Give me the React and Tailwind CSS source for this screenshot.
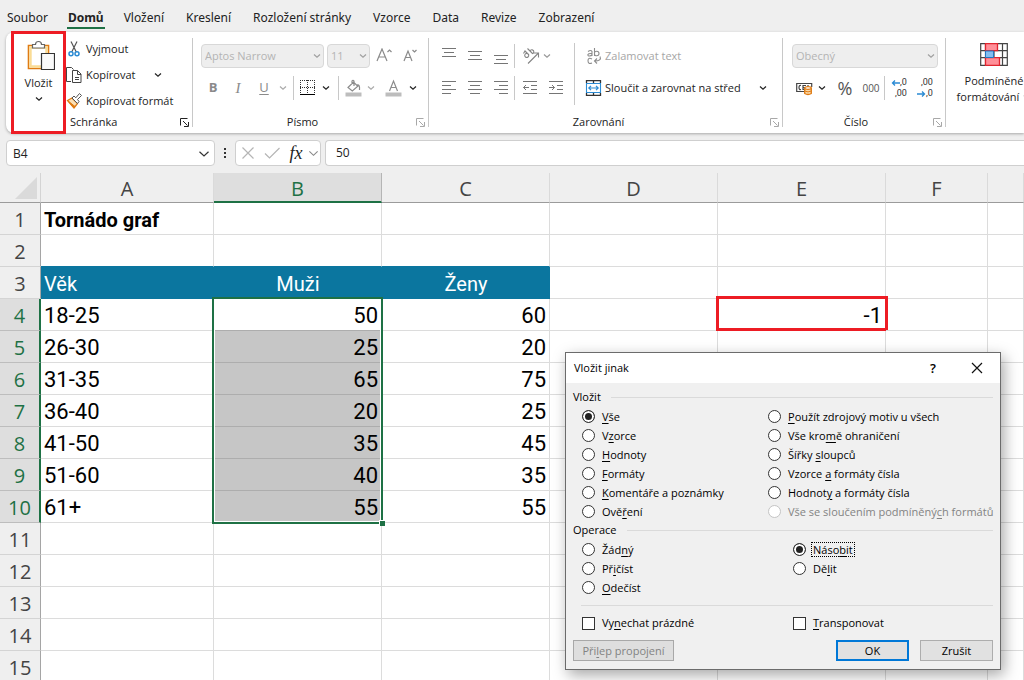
import React from "react";

const uiFont = "font-['Open_Sans','Noto_Sans',sans-serif]";

function Chevron({ className = "text-[#222]", size = 8 }) {
  return (
    <svg width={size} height={size} viewBox="0 0 8 8" className={className} fill="none" stroke="currentColor" strokeWidth={size > 8 ? 0.8 : 1.2} aria-hidden="true">
      <path d="M1 2.500 4 5.300 7 2.500" />
    </svg>
  );
}

function Launcher({ label, className = "text-[#222]" }) {
  return (
    <button aria-label={label} className={"absolute right-[3px] bottom-1.5 " + className}>
      <svg width="9" height="9" viewBox="0 0 9 9" fill="none" stroke="currentColor" aria-hidden="true">
        <path d="M.5 7.500v-7h7M3 3l4.500 4.500M8.500 4v4.500h-4.500" />
      </svg>
    </button>
  );
}

function Group({ label, launcher, launcherTone, labelClass = "text-center", className, children }) {
  return (
    <>
      <section aria-label={label} className={"relative flex shrink-0 flex-col " + className}>
        <div className="flex-1">{children}</div>
        <div className={"mb-[3px] h-4 text-[11px] leading-4 " + labelClass}>{label}</div>
        {launcher && <Launcher label={launcher} className={launcherTone} />}
      </section>
      <div className="my-1.5 w-px shrink-0 bg-[#c8c8c8]" />
    </>
  );
}

function IconButton({ label, className = "w-[26px]", children }) {
  return (
    <button aria-label={label} className={"flex h-6 shrink-0 items-center justify-center " + className}>
      {children}
    </button>
  );
}

function Divider() {
  return <div className="h-6 w-px shrink-0 bg-[#c8c8c8]" />;
}

function RibbonSelect({ label, value, className }) {
  return (
    <div className={"relative shrink-0 " + className}>
      <select aria-label={label} disabled className="block h-6 w-full appearance-none rounded-[4px] border border-[#d8d8d8] bg-[#eeeeee] pl-[3px] text-[11px] text-[#b4b4b4]">
        <option>{value}</option>
      </select>
      <Chevron className="pointer-events-none absolute top-2 right-[3px] text-[#a0a0a0]" />
    </div>
  );
}

function Lines({ d }) {
  return (
    <svg width="16" height="16" viewBox="0 0 16 16" fill="none" stroke="#757575" aria-hidden="true">
      <path d={d} />
    </svg>
  );
}

function ClipboardGroup() {
  return (
    <Group label="Schránka" labelClass="pl-16" launcher="Možnosti schránky" className="w-[186px]">
      <div className="flex">
        <button className="relative flex h-20 w-[60px] flex-col items-center pt-2 pl-[9px] text-[11px]">
          <svg width="28" height="32" viewBox="0 0 28 32" fill="none" aria-hidden="true">
            <path d="M1.500 5.500h20v23h-20z" fill="#fff" stroke="#df7b13" strokeWidth="1.600" />
            <path d="M3.500 7.500h16v19h-16z" stroke="#fadc95" strokeWidth="2.400" />
            <path d="M5.500 8V4.500h3C8.500 2.500 9.800 1.500 11.500 1.500s3 1 3 3h3V8z" fill="#fff" stroke="#666" strokeWidth="1.200" />
            <path d="M14.500 13.500h13v16h-13z" fill="#fafafa" stroke="#333" strokeWidth="1.200" />
          </svg>
          <span className="mt-[3px] pr-1 leading-4">Vložit</span>
          <Chevron className="mt-1 mr-1 text-[#222]" />
          <span aria-hidden="true" className="absolute -top-px left-[5px] h-[103px] w-[55px] border-[3px] border-[#ed1c24]" />
        </button>
        <div className="flex flex-col items-start pt-1 text-[11px]">
          <button className="flex h-[26px] items-center gap-1">
            <svg width="16" height="18" viewBox="0 0 16 18" fill="none" aria-hidden="true">
              <path d="M5 1.500 10.300 12M11 1.500 5.700 12" stroke="#555" strokeWidth="1.200" />
              <circle cx="5" cy="13.800" r="2" stroke="#2b8bd4" strokeWidth="1.500" />
              <circle cx="11" cy="13.800" r="2" stroke="#2b8bd4" strokeWidth="1.500" />
            </svg>
            Vyjmout
          </button>
          <button className="flex h-[26px] items-center gap-1">
            <svg width="16" height="18" viewBox="0 0 16 18" fill="none" stroke="#444" aria-hidden="true">
              <path d="M5 15.500H.5v-14h5l2 2" />
              <path d="M6.500 4.500h5l3.500 3.500v8.500H6.500z" fill="#fff" />
              <path d="M11.500 4.500v4h3.500M9 11.500h4M9 13.500h4" />
            </svg>
            Kopírovat
            <Chevron className="ml-3.5 text-[#222]" />
          </button>
          <button className="flex h-[26px] items-center gap-1">
            <svg width="16" height="18" viewBox="0 0 16 18" fill="none" aria-hidden="true">
              <path d="M1.500 8.500 6 6l5.500 5.500L8 16z" fill="#fbe0b5" stroke="#df7b13" strokeWidth="1.300" />
              <path d="M2 9l7 5.500L8 16z" fill="#df7b13" stroke="#df7b13" />
              <path d="M6 6l2-2 1.800 1.800L13.500 1.500 15.500 3.500 11.500 7.500 13 9.500 11.500 11.500z" fill="#fff" stroke="#555" />
            </svg>
            Kopírovat formát
          </button>
        </div>
      </div>
    </Group>
  );
}

function FontGroup() {
  return (
    <Group label="Písmo" launcher="Nastavení písma" launcherTone="text-[#a8a8a8]" labelClass="text-center pr-4" className="w-[235px]">
      <div className="flex flex-col gap-2 pt-3 pl-2 text-[#8a8a8a]">
        <div className="flex items-center">
          <RibbonSelect label="Písmo" value="Aptos Narrow" className="mr-[3px] w-[123px]" />
          <RibbonSelect label="Velikost písma" value="11" className="w-[43px]" />
          <IconButton label="Zvětšit písmo" className="w-7">
            <svg width="16" height="16" viewBox="0 0 16 16" fill="none" stroke="currentColor" strokeWidth="1.200" aria-hidden="true">
              <path d="M1 13 6 1l5 12M2.800 9h6.400M11.500 4 13.500 2l2 2" />
            </svg>
          </IconButton>
          <IconButton label="Zmenšit písmo" className="w-6">
            <svg width="16" height="16" viewBox="0 0 16 16" fill="none" stroke="currentColor" strokeWidth="1.200" aria-hidden="true">
              <path d="M2 13 6 3l4 10M3.500 9.500h5M10.500 2l2 2 2-2" />
            </svg>
          </IconButton>
        </div>
        <div className="flex items-center">
          <IconButton label="Tučné" className="w-6"><b className="text-[13px]">B</b></IconButton>
          <IconButton label="Kurzíva"><i className="font-['Liberation_Serif',serif] text-[15px]">I</i></IconButton>
          <IconButton label="Podtržené"><span className="text-[13px] underline underline-offset-2">U</span></IconButton>
          <IconButton label="Styly podtržení" className="mr-1 w-3"><Chevron className="text-[#aaa]" /></IconButton>
          <Divider />
          <IconButton label="Ohraničení" className="ml-1 w-5">
            <svg width="16" height="16" viewBox="0 0 16 16" fill="none" stroke="#333" shapeRendering="crispEdges" aria-hidden="true">
              <path d="M0 .5h15M0 7.500h15M.5 0v14M7.500 0v14M14.500 0v14" strokeDasharray="1 1" />
              <path d="M0 14.500h15" stroke="#000" />
            </svg>
          </IconButton>
          <IconButton label="Styly ohraničení" className="mr-1 w-4"><Chevron /></IconButton>
          <Divider />
          <IconButton label="Barva výplně" className="ml-0.5 w-6">
            <svg width="17" height="18" viewBox="0 0 17 18" fill="none" stroke="#8c8c8c" strokeWidth="1.200" aria-hidden="true">
              <path d="M3 8.500 8.500 3l4.300 4.300-5.500 4.700zM7 5V2q1-1.500 2 0v5M12 6q3-1 2.500 5" />
              <path d="M.5 15.500h16" stroke="#bdbdbd" strokeWidth="4" />
            </svg>
          </IconButton>
          <IconButton label="Další barvy výplně" className="w-3"><Chevron className="text-[#aaa]" /></IconButton>
          <IconButton label="Barva písma" className="ml-0.5 w-7">
            <svg width="17" height="18" viewBox="0 0 17 18" fill="none" stroke="#8c8c8c" strokeWidth="1.200" aria-hidden="true">
              <path d="M4.500 12 8.500 2l4 10M6 8.500h5" />
              <path d="M.5 15.500h16" stroke="#bdbdbd" strokeWidth="4" />
            </svg>
          </IconButton>
          <IconButton label="Další barvy písma" className="w-3"><Chevron /></IconButton>
        </div>
      </div>
    </Group>
  );
}

function AlignmentGroup() {
  return (
    <Group label="Zarovnání" launcher="Nastavení zarovnání" launcherTone="text-[#a8a8a8]" labelClass="text-center pr-3.5" className="w-[353px]">
      <div className="flex pt-3 pl-[7px]">
        <div className="flex flex-col gap-2">
          <div className="flex">
            <IconButton label="Zarovnat nahoru"><Lines d="M1 .5h14M3 4.500h10M1 8.500h14" /></IconButton>
            <IconButton label="Zarovnat na střed výšky"><Lines d="M1 3.500h14M3 7.500h10M1 11.500h14" /></IconButton>
            <IconButton label="Zarovnat dolů"><Lines d="M1 7.500h14M3 11.500h10M1 15.500h14" /></IconButton>
            <Divider />
            <IconButton label="Orientace" className="ml-1.5 w-5">
              <svg width="18" height="18" viewBox="0 0 18 18" fill="none" stroke="#858585" strokeWidth="1.100" aria-hidden="true">
                <path d="M6 16.500 16 6.500M12 6h4.500v4.500" />
                <path d="M1.500 6.500l1.500-2.500 4 4M6.500 7.500a2 2 0 1 0-3 2.500 2 2 0 0 0 3-2.500M5.500 1.500l5 5M8 4a2 2 0 1 1 2 2.800" />
              </svg>
            </IconButton>
            <IconButton label="Další orientace" className="w-3"><Chevron className="text-[#999]" /></IconButton>
          </div>
          <div className="flex">
            <IconButton label="Zarovnat vlevo"><Lines d="M1 1.500h14M1 5.500h9M1 9.500h14M1 13.500h9" /></IconButton>
            <IconButton label="Zarovnat na střed"><Lines d="M1 1.500h14M3 5.500h10M1 9.500h14M3 13.500h10" /></IconButton>
            <IconButton label="Zarovnat vpravo"><Lines d="M1 1.500h14M6 5.500h9M1 9.500h14M6 13.500h9" /></IconButton>
            <Divider />
            <IconButton label="Zmenšit odsazení" className="ml-0.5 w-[26px]"><Lines d="M1 1.500h14M9 5.500h6M9 9.500h6M1 13.500h14M7 7.500H1.500M4 5 1.500 7.500 4 10" /></IconButton>
            <IconButton label="Zvětšit odsazení"><Lines d="M1 1.500h14M9 5.500h6M9 9.500h6M1 13.500h14M1 7.500h5.500M4 5 6.500 7.500 4 10" /></IconButton>
          </div>
        </div>
        <div className="-mt-px mr-2.5 ml-[5px] h-[62px] w-px bg-[#c8c8c8]" />
        <div className="flex flex-1 flex-col gap-2 pr-[15px] text-[11px]">
          <button className="flex h-6 items-center gap-[3px] text-[#a6a6a6]">
            <svg width="17" height="18" viewBox="0 0 17 18" fill="none" stroke="#8c8c8c" strokeWidth="1.100" aria-hidden="true">
              <path d="M3 4.500q3-2 4 0v4.500M7 6.500c-5-.5-5 2.500-2.500 2.500Q6.500 9 7 7.500M9.500 1v8M9.500 6c0-2.500 4.500-2.500 4.500.500s-4.500 3-4.500.500M7 12q-4-2-4 1.800T7 16M15 9.500q2 4.500-5.500 4.500M12 11.500 9.500 14l2.500 2.500" />
            </svg>
            Zalamovat text
          </button>
          <button className="flex h-6 items-center gap-[3px]">
            <svg width="17" height="16" viewBox="0 0 17 16" fill="none" aria-hidden="true">
              <path d="M1.500 3V.7h14V3M1.500 13v2.300h14V13M8.500 1v3M8.500 12v3" stroke="#333" strokeWidth="1.300" />
              <path d="M1.500 3.500h14v9h-14z" fill="#fff" stroke="#2b8bd4" strokeWidth="1.100" />
              <path d="M4 8h9M6 5.800 3.800 8 6 10.200M11 5.800 13.200 8 11 10.200" stroke="#2b8bd4" strokeWidth="1.200" />
            </svg>
            Sloučit a zarovnat na střed
            <Chevron className="ml-auto text-[#222]" />
          </button>
        </div>
      </div>
    </Group>
  );
}

function NumberGroup() {
  return (
    <Group label="Číslo" launcher="Formát čísla" launcherTone="text-[#a8a8a8]" labelClass="text-center pr-4" className="w-[162px]">
      <div className="flex flex-col gap-2 pt-3 pl-[9px]">
        <RibbonSelect label="Formát čísla" value="Obecný" className="w-[146px]" />
        <div className="flex">
          <IconButton label="Účetnický formát" className="w-6">
            <svg width="17" height="16" viewBox="0 0 17 16" fill="none" aria-hidden="true">
              <path d="M9 11.500H.7V3.500h15V7M5 5.500Q3 5 3 7.500t2 2M10 5.500H7v4h1.500M7 7.500h2.500M12 5v2" stroke="#444" strokeWidth="1.200" />
              <path d="M8.700 8v5.500q3.300 2 6.600 0V8" fill="#fbd9a8" stroke="#df7b13" strokeWidth="1.300" />
              <ellipse cx="12" cy="8" rx="3.300" ry="1.300" fill="#fff" stroke="#df7b13" strokeWidth="1.200" />
              <path d="M8.700 11q3.300 1.800 6.600 0" stroke="#df7b13" />
            </svg>
          </IconButton>
          <IconButton label="Další měny" className="w-3"><Chevron /></IconButton>
          <IconButton label="Styl procent" className="ml-1 w-[26px]"><span className="text-[18px] text-[#555]">%</span></IconButton>
          <IconButton label="Styl čárky"><span className="text-[10px] text-[#555]">000</span></IconButton>
          <Divider />
          <IconButton label="Přidat desetinné místo" className="w-7">
            <span className="flex flex-col items-end font-[Roboto,sans-serif] text-[9px] leading-[11px] text-[#333]">
              <span className="flex items-center">
                <svg width="9" height="8" viewBox="0 0 9 8" fill="none" stroke="#2b8bd4" strokeWidth="1.300" aria-hidden="true"><path d="M9 4H1.500M4 1.500 1.500 4 4 6.500" /></svg>
                ,0
              </span>
              <span>,00</span>
            </span>
          </IconButton>
          <IconButton label="Odebrat desetinné místo" className="w-6">
            <span className="flex flex-col items-end font-[Roboto,sans-serif] text-[9px] leading-[11px] text-[#333]">
              <span>,00</span>
              <span className="flex items-center">
                <svg width="9" height="8" viewBox="0 0 9 8" fill="none" stroke="#2b8bd4" strokeWidth="1.300" aria-hidden="true"><path d="M0 4h7.500M5 1.500 7.500 4 5 6.500" /></svg>
                ,0
              </span>
            </span>
          </IconButton>
        </div>
      </div>
    </Group>
  );
}

function Ribbon() {
  return (
    <div className="ml-1.5 flex h-[101px] shrink-0 rounded-l-lg bg-white text-[#222] shadow-[0_1px_3px_rgba(0,0,0,0.3)]">
      <ClipboardGroup />
      <FontGroup />
      <AlignmentGroup />
      <NumberGroup />
      <button className="ml-1.5 flex w-[84px] shrink-0 flex-col items-center pt-[11px] text-[11px] leading-4 whitespace-nowrap">
        <svg width="28" height="24" viewBox="0 0 28 24" fill="none" className="mb-1.5" aria-hidden="true">
          <path d="M.7.700h26.600v21.600H.7zM.7 7.700h26.600M.7 14.700h26.600M5.500.700v21.600M14 .700v21.600M22.500.700v21.600" stroke="#444" strokeWidth="1.200" />
          <path d="M5.500.700h12v7h-12zM5.500 14.700h14v7.600h-14z" fill="#ff8f98" stroke="#e0252f" strokeWidth="1.300" />
          <path d="M5.500 8h8v6.500h-8z" fill="#83bdf0" stroke="#2376c0" />
        </svg>
        <span>Podmíněné</span>
        <span className="flex items-center gap-1">formátování <Chevron /></span>
      </button>
    </div>
  );
}

const tabs = ["Soubor", "Domů", "Vložení", "Kreslení", "Rozložení stránky", "Vzorce", "Data", "Revize", "Zobrazení"];

function TabBar() {
  return (
    <nav className="flex h-8 shrink-0 items-start gap-[22px] pt-[9px] pl-[7px] font-['Noto_Sans',sans-serif] text-[12px] leading-[18px] text-[#222]">
      {tabs.map((t) =>
        t === "Domů" ? (
          <a key={t} href="#domu" aria-current="page" className="-mx-[3px] border-b-2 border-[#1e7145] px-px font-bold">{t}</a>
        ) : (
          <a key={t} href="#karta">{t}</a>
        )
      )}
    </nav>
  );
}

function FormulaBar() {
  return (
    <div className="mt-[7px] flex h-[26px] shrink-0 items-stretch pl-1.5 text-[12px] text-[#222]">
      <div className="relative w-[209px]">
        <input aria-label="Pole názvů" defaultValue="B4" className="h-full w-full rounded-[4px] border border-[#cfcfcf] bg-white pl-1.5" />
        <Chevron size={12} className="pointer-events-none absolute top-[8px] right-[5px] text-[#333]" />
      </div>
      <div className="flex w-5 flex-col items-center justify-center gap-0.5">
        <span className="size-0.5 bg-[#333]" />
        <span className="size-0.5 bg-[#333]" />
        <span className="size-0.5 bg-[#333]" />
      </div>
      <div className="flex w-[86px] items-center rounded-[4px] border border-[#cfcfcf] bg-white">
        <button aria-label="Zrušit zadání" className="flex w-6 justify-center">
          <svg width="14" height="14" viewBox="0 0 14 14" stroke="#b5b5b5" strokeWidth="1.200" aria-hidden="true"><path d="m1.500 1.500 11 11M12.500 1.500l-11 11" /></svg>
        </button>
        <button aria-label="Potvrdit zadání" className="flex w-6 justify-center">
          <svg width="16" height="14" viewBox="0 0 16 14" fill="none" stroke="#b5b5b5" strokeWidth="1.200" aria-hidden="true"><path d="m1 7.500 4.500 4.500 10-10" /></svg>
        </button>
        <button aria-label="Vložit funkci" className="flex w-6 justify-center font-['Liberation_Serif',serif] text-[18px] leading-5 italic">fx</button>
        <Chevron size={11} className="text-[#888]" />
      </div>
      <input aria-label="Řádek vzorců" defaultValue="50" className="ml-1 min-w-0 flex-1 rounded-l-[4px] border border-r-0 border-[#cfcfcf] bg-white pl-[10px]" />
    </div>
  );
}

const columns = ["A", "B", "C", "D", "E", "F", "G"];
const data = {
  4: ["18-25", "50", "60"],
  5: ["26-30", "25", "20"],
  6: ["31-35", "65", "75"],
  7: ["36-40", "20", "25"],
  8: ["41-50", "35", "45"],
  9: ["51-60", "40", "35"],
  10: ["61+", "55", "55"],
};

function Cell({ row, col }) {
  const line = "relative h-8 border-r border-b p-0 pt-0.5 border-[#dcdcdc] ";
  const blue = "h-8 border-b border-[#0b769f] bg-[#0b769f] p-0 pt-0.5 text-[20px] text-white ";
  if (row === 1 && col === "A") return <td className={line + "pl-[3px] text-[20px] font-bold whitespace-nowrap"}>Tornádo graf</td>;
  if (row === 2 && (col === "A" || col === "B" || col === "C")) return <td className="h-8 border-r border-b border-r-[#dcdcdc] border-b-[#0b769f] p-0" />;
  if (row === 3 && col === "A") return <td className={blue + "pl-[3px]"}>Věk</td>;
  if (row === 3 && col === "B") return <td className={blue + "text-center"}>Muži</td>;
  if (row === 3 && col === "C") return <td className={blue + "text-center"}>Ženy</td>;
  if (row === 4 && col === "E")
    return (
      <td className={line + "pr-[3px] text-right"}>
        -1
        <span aria-hidden="true" className="absolute -top-[3px] -right-[3px] -bottom-px -left-0.5 border-[3px] border-[#ed1c24]" />
      </td>
    );
  if (data[row]) {
    if (col === "A") return <td className={line + "pl-[3px]"}>{data[row][0]}</td>;
    if (col === "B")
      return (
        <td className={"h-8 border-b border-[#adadad] p-0 pt-0.5 pr-1 text-right " + (row === 4 ? "relative" : "bg-[#c6c6c6]")}>
          {data[row][1]}
          {row === 4 && (
            <span aria-hidden="true" className="absolute -top-0.5 -right-px -left-0.5 z-10 h-[227px] border-2 border-[#1e7145]">
              <span className="block h-full border border-t-0 border-white" />
              <span className="absolute -right-1 -bottom-1 size-1.5 border-t border-l border-white bg-[#1e7145]" />
            </span>
          )}
        </td>
      );
    if (col === "C") return <td className={line + "pr-[3px] text-right"}>{data[row][2]}</td>;
  }
  return <td className={line} />;
}

function Sheet() {
  const rows = Array.from({ length: 15 }, (_, i) => i + 1);
  return (
    <div className="mt-[7px] min-h-0 flex-1 overflow-hidden">
      <table className="w-full table-fixed border-separate border-spacing-0 bg-white font-[Roboto,sans-serif] text-[22px] leading-6 text-black">
        <colgroup>
          <col className="w-[41px]" />
          <col className="w-[173px]" />
          <col className="w-[168px]" />
          <col className="w-[168px]" />
          <col className="w-[168px]" />
          <col className="w-[168px]" />
          <col className="w-[102px]" />
          <col />
        </colgroup>
        <thead>
          <tr className="font-['Open_Sans',sans-serif] text-[20px] text-[#444]">
            <th className="h-[30px] border-r border-b border-[#d4d4d4] border-b-[#9b9b9b] bg-[#efefef] p-0">
              <svg width="22" height="22" viewBox="0 0 22 22" className="ml-[15px]" aria-hidden="true"><path d="M22 0v22H0z" fill="#dadada" /></svg>
            </th>
            {columns.map((c) => (
              <th
                key={c}
                scope="col"
                className={
                  c === "B"
                    ? "h-[30px] border-r border-b-2 border-r-[#b5b5b5] border-b-[#1e7145] bg-[#dedede] p-0 pt-1 font-normal text-[#1e7145]"
                    : "h-[30px] border-r border-b border-r-[#dadada] border-b-[#9b9b9b] bg-[#efefef] p-0 pt-[3px] font-normal"
                }
              >
                {c === "G" ? "" : c}
              </th>
            ))}
          </tr>
        </thead>
        <tbody>
          {rows.map((r) => (
            <tr key={r}>
              <th
                scope="row"
                className={
                  data[r]
                    ? "h-8 border-r-2 border-b border-r-[#1e7145] border-b-[#bdbdbd] bg-[#dedede] p-0 pt-0.5 font-['Open_Sans',sans-serif] text-[20px] font-normal text-[#1e7145]"
                    : "h-8 border-r border-b border-r-[#a5a5a5] border-b-[#d4d4d4] bg-[#efefef] p-0 pt-0.5 font-['Open_Sans',sans-serif] text-[20px] font-normal text-[#444]"
                }
              >
                {r}
              </th>
              {columns.map((c) => (
                <Cell key={c} row={r} col={c} />
              ))}
            </tr>
          ))}
        </tbody>
      </table>
    </div>
  );
}

// Splits "Vz_o_rce" so that the part between underscores is the access key.
function AccessText({ text }) {
  const [before, key, after] = text.split("_");
  return (
    <>
      {before}
      <u className="underline-offset-2">{key}</u>
      {after}
    </>
  );
}

function Radio({ name, text, checked, disabled, focused }) {
  return (
    <label className={"flex h-[19px] items-center gap-1.5 whitespace-nowrap " + (disabled ? "text-[#838383]" : "")}>
      <input
        type="radio"
        name={name}
        defaultChecked={checked}
        disabled={disabled}
        className="size-[13px] shrink-0 appearance-none rounded-full border border-[#333] bg-white checked:bg-[#222] checked:shadow-[inset_0_0_0_2px_white] disabled:border-[#c4c4c4]"
      />
      <span className={focused ? "-ml-px border border-dotted border-black px-px leading-[13px]" : "px-px"}>
        <AccessText text={text} />
      </span>
    </label>
  );
}

function Check({ text }) {
  return (
    <label className="flex items-center gap-1.5">
      <input type="checkbox" className="size-[13px] shrink-0 appearance-none border border-[#333] bg-white" />
      <span className="px-px"><AccessText text={text} /></span>
    </label>
  );
}

function Legend({ children }) {
  return (
    <div className="flex h-4 items-center gap-2.5">
      <span>{children}</span>
      <span className="h-px flex-1 bg-[#dadada]" />
    </div>
  );
}

function PasteDialog() {
  return (
    <div role="dialog" aria-label="Vložit jinak" className="absolute top-[352px] left-[565px] z-20 w-[436px] border border-[#6b6b6b] bg-[#f0f0f0] text-[11px] leading-4 text-black shadow-[3px_5px_14px_rgba(0,0,0,0.35)]">
      <div className="flex h-[30px] items-center bg-white pr-[17px] pl-2">
        <span className="flex-1">Vložit jinak</span>
        <button aria-label="Nápověda" className="w-7 text-[13px] font-semibold">?</button>
        <button aria-label="Zavřít" className="ml-6 flex">
          <svg width="12" height="12" viewBox="0 0 12 12" stroke="#111" strokeWidth="1.200" aria-hidden="true"><path d="m1 1 10 10M11 1 1 11" /></svg>
        </button>
      </div>
      <div className="px-[7px] pt-1.5 pb-2">
        <Legend>Vložit</Legend>
        <div role="radiogroup" aria-label="Vložit" className="mt-0.5 grid grid-flow-col grid-cols-[186px_1fr] grid-rows-6 pb-px pl-[9px]">
          <Radio name="paste" text="_V_še" checked />
          <Radio name="paste" text="V_z_orce" />
          <Radio name="paste" text="_H_odnoty" />
          <Radio name="paste" text="_F_ormáty" />
          <Radio name="paste" text="_K_omentáře a poznámky" />
          <Radio name="paste" text="Ově_ř_ení" />
          <Radio name="paste" text="_P_oužít zdrojový motiv u všech" />
          <Radio name="paste" text="Vše kro_m_ě ohraničení" />
          <Radio name="paste" text="Šířky _s_loupců" />
          <Radio name="paste" text="Vzorce _a_ formáty čísla" />
          <Radio name="paste" text="Hodnot_y_ a formáty čísla" />
          <Radio name="paste" text="Vše se sloučením podmíněný_c_h formátů" disabled />
        </div>
        <Legend>Operace</Legend>
        <div role="radiogroup" aria-label="Operace" className="mt-0.5 grid grid-flow-col grid-cols-[211px_1fr] grid-rows-3 pl-[9px]">
          <Radio name="operation" text="Žád_n_ý" />
          <Radio name="operation" text="Př_i_číst" />
          <Radio name="operation" text="_O_dečíst" />
          <Radio name="operation" text="Náso_b_it" checked focused />
          <Radio name="operation" text="Dě_l_it" />
        </div>
        <hr className="mt-2 ml-2 border-[#dadada]" />
        <div className="mt-[9px] grid grid-cols-[211px_1fr] pl-[9px]">
          <Check text="Vy_n_echat prázdné" />
          <Check text="_T_ransponovat" />
        </div>
        <div className="mt-[9px] flex gap-[11px]">
          <button disabled className="mr-auto h-[21px] w-[101px] border border-[#a8a8a8] bg-[#dedede] leading-[17px] text-[#838383]"><AccessText text="Při_l_ep propojení" /></button>
          <button className="h-[21px] w-[73px] border-2 border-[#0078d7] bg-[#e1e1e1] leading-[17px]">OK</button>
          <button className="h-[21px] w-[73px] border border-[#adadad] bg-[#e1e1e1] leading-[17px]">Zrušit</button>
        </div>
      </div>
    </div>
  );
}

export default function App() {
  return (
    <div className={"relative flex h-screen flex-col overflow-hidden bg-[#efefef] " + uiFont}>
      <TabBar />
      <Ribbon />
      <FormulaBar />
      <Sheet />
      <PasteDialog />
    </div>
  );
}
